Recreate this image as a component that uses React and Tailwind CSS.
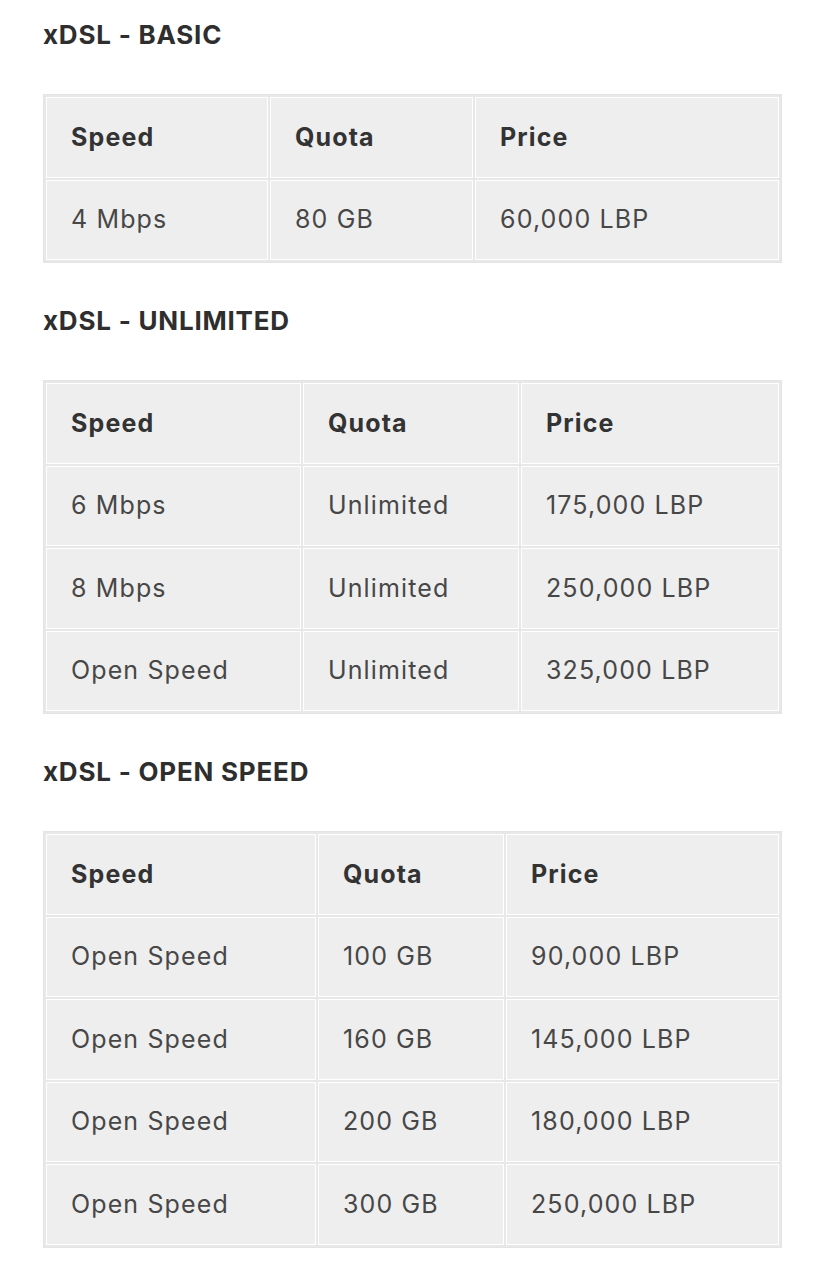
const plans = [
  {
    title: 'xDSL - BASIC',
    widths: ['w-[222px]', 'w-[203px]', 'w-[304px]'],
    rows: [['4 Mbps', '80 GB', '60,000 LBP']],
  },
  {
    title: 'xDSL - UNLIMITED',
    widths: ['w-[255px]', 'w-[216px]', 'w-[258px]'],
    rows: [
      ['6 Mbps', 'Unlimited', '175,000 LBP'],
      ['8 Mbps', 'Unlimited', '250,000 LBP'],
      ['Open Speed', 'Unlimited', '325,000 LBP'],
    ],
  },
  {
    title: 'xDSL - OPEN SPEED',
    widths: ['w-[270px]', 'w-[186px]', 'w-[273px]'],
    rows: [
      ['Open Speed', '100 GB', '90,000 LBP'],
      ['Open Speed', '160 GB', '145,000 LBP'],
      ['Open Speed', '200 GB', '180,000 LBP'],
      ['Open Speed', '300 GB', '250,000 LBP'],
    ],
  },
];

const cell = 'h-[80.5px] border border-white bg-[#eeeeee] pl-[24px] pr-2 align-middle text-left';

function PlanTable({ plan }) {
  return (
    <table className="table-fixed w-[739px] border-separate border-spacing-[2px] border border-[#e4e4e4] bg-[#e8e8e8]">
      <thead>
        <tr>
          {['Speed', 'Quota', 'Price'].map((h, i) => (
            <th key={h} className={`${cell} ${plan.widths[i]} font-bold text-[#333333]`}>
              {h}
            </th>
          ))}
        </tr>
      </thead>
      <tbody>
        {plan.rows.map((row, r) => (
          <tr key={r}>
            {row.map((v, i) => (
              <td key={i} className={`${cell} font-normal text-[#474747]`}>
                {v}
              </td>
            ))}
          </tr>
        ))}
      </tbody>
    </table>
  );
}

export default function App() {
  return (
    <div className="min-h-[1280px] bg-white px-[43px] pt-[20px] pb-8 font-['Inter',sans-serif] text-[25px] tracking-[0.045em]">
      <div className="flex flex-col gap-[43px]">
        {plans.map((plan) => (
          <div key={plan.title} className="flex flex-col gap-[44px]">
            <h2 className="h-[30px] leading-[30px] text-[26px] font-bold text-[#2e2e2e] tracking-[0.03em]">
              {plan.title}
            </h2>
            <PlanTable plan={plan} />
          </div>
        ))}
      </div>
    </div>
  );
}
